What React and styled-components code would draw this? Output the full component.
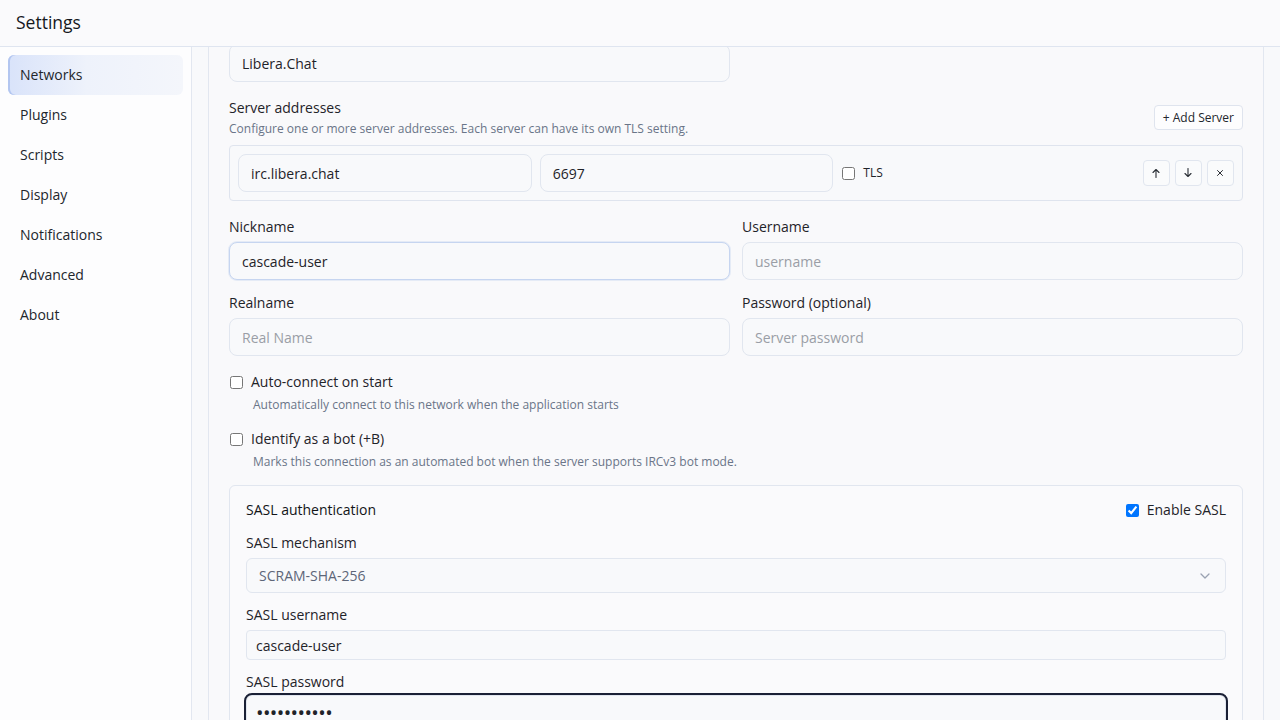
import React, { useLayoutEffect, useRef } from "react";
import styled, { createGlobalStyle } from "styled-components";

const GlobalStyle = createGlobalStyle`
html, body {
    margin: 0;
    height: 100%;
    overflow: hidden;
}
body {
    font-family: "Open Sans", "Noto Sans", "Liberation Sans", sans-serif;
    color: #1f2329;
    background: #f8f9fb;
}
#root {
    height: 100%;
}
* {
    box-sizing: border-box;
}
`

const Shell = styled.div`
display: flex;
flex-direction: column;
height: 100vh;
`
const Header = styled.header`
height: 47px;
flex-shrink: 0;
display: flex;
align-items: center;
padding-left: 16px;
padding-bottom: 2px;
background: #fafafc;
border-bottom: 1px solid #dfe5f0;
font-size: 17.5px;
font-weight: 500;
color: #15181d;
`
const Body = styled.div`
flex: 1;
display: flex;
min-height: 0;
`
const Sidebar = styled.nav`
width: 192px;
flex-shrink: 0;
padding: 8px;
background: #fdfdfe;
border-right: 1px solid #e2e7f0;
display: flex;
flex-direction: column;
`
const NavItem = styled.div`
height: 40px;
display: flex;
align-items: center;
padding: 0 0 2px 12px;
border-radius: 6px;
font-size: 14px;
color: #22262c;
background: ${p => p.$active ? "linear-gradient(90deg, #d9e3fa 0%, #eef2fb 45%, #f4f6fb 100%)" : "transparent"};
box-shadow: ${p => p.$active ? "inset 2px 0 0 #b3c6f0" : "none"};
`
const Main = styled.main`
flex: 1;
overflow: hidden;
padding: 16px;
background: #f8f9fb;
`
const Card = styled.section`
border: 1px solid #e2e7f0;
border-radius: 8px;
background: #f9f9fb;
padding: 20px;
display: flex;
flex-direction: column;
gap: 16px;
`
const Field = styled.div`
display: flex;
flex-direction: column;
gap: ${p => p.$gap || 5}px;
min-width: 0;
`
const Label = styled.label`
font-size: 14px;
line-height: 20px;
color: ${p => p.$strong ? "#111418" : "#1f2329"};
font-weight: ${p => p.$strong ? 500 : 400};
`
const Hint = styled.div`
font-size: 12px;
line-height: 16px;
color: #6a7588;
padding-left: ${p => p.$indent ? "24px" : "0"};
`
const TextInput = styled.input`
width: 100%;
height: ${p => p.$h || 38}px;
padding: 0 12px;
border: 1px solid ${p => p.$focus ? "#c6d5f0" : "#e1e6ef"};
border-radius: ${p => p.$r || 8}px;
background: #f8f9fb;
font-family: inherit;
font-size: 14px;
color: #1f2329;
outline: none;
box-shadow: ${p => p.$focus ? "0 0 0 1px rgba(140,170,230,0.18)" : "none"};
&::placeholder {
    color: #9a9ea6;
}
`
const PasswordInput = styled(TextInput)`
border: 1px solid #e1e6ef;
outline: 2px solid #1a2035;
outline-offset: 0;
padding: 0 9px;
font-size: 20px;
letter-spacing: -0.6px;
`
const HalfGrid = styled.div`
display: grid;
grid-template-columns: 1fr 1fr;
column-gap: 12px;
row-gap: 13px;
`
const SectionHead = styled.div`
display: flex;
align-items: center;
justify-content: space-between;
margin-bottom: -8px;
`
const HeadText = styled.div`
display: flex;
flex-direction: column;
gap: 3px;
`
const SmallButton = styled.button`
height: 25px;
padding: 0 8px;
border: 1px solid #dfe4ee;
border-radius: 4px;
background: #fdfdfe;
font-family: inherit;
font-size: 12px;
color: #22262c;
`
const ServerBox = styled.div`
display: grid;
grid-template-columns: 1fr 1fr 1fr auto;
gap: 8px;
align-items: center;
padding: 8px;
border: 1px solid #dfe4ee;
border-radius: 4px;
background: #f8f9fb;
`
const CheckRow = styled.label`
display: flex;
align-items: center;
gap: 8px;
font-size: ${p => p.$small ? 12 : 14}px;
line-height: 20px;
color: #1f2329;
input {
    margin: 0 0 0 1px;
    width: 13px;
    height: 13px;
}
`
const IconButtons = styled.div`
display: flex;
gap: 5px;
`
const IconButton = styled.button`
width: 27px;
height: 26px;
padding: 0;
display: flex;
align-items: center;
justify-content: center;
border: 1px solid #e1e6ef;
border-radius: 4px;
background: #fafbfc;
color: #22262c;
`
const OptionBlock = styled.div`
display: flex;
flex-direction: column;
gap: 5px;
`
const SaslBox = styled.div`
margin-top: -1px;
border: 1px solid #e1e6ef;
border-radius: 6px;
background: #fafafc;
padding: 16px;
display: flex;
flex-direction: column;
gap: 12px;
`
const SaslHead = styled.div`
display: flex;
align-items: center;
justify-content: space-between;
height: 16px;
margin-bottom: 3px;
`
const SelectWrap = styled.div`
position: relative;
`
const SelectBox = styled.select`
width: 100%;
height: 35px;
padding: 0 12px;
appearance: none;
border: 1px solid #e1e6ef;
border-radius: 6px;
background: #f8f9fb;
font-family: inherit;
font-size: 14px;
color: #5d6678;
outline: none;
`
const Chevron = styled.svg`
position: absolute;
right: 15px;
top: 12px;
pointer-events: none;
`

const navItems = ["Networks", "Plugins", "Scripts", "Display", "Notifications", "Advanced", "About"];

function Arrow({ dir }) {
    // small thin arrow used in the server row buttons
    const d = dir === "up" ? "M5 9.5V1.5M2 4.5l3-3 3 3" : "M5 0.5v8M2 5.5l3 3 3-3";
    return (
        <svg width="10" height="10" viewBox="0 0 10 10">
            <path d={d} fill="none" stroke="#2a2e35" strokeWidth="1.1" strokeLinecap="round" strokeLinejoin="round" />
        </svg>
    );
}

function Cross() {
    return (
        <svg width="8" height="8" viewBox="0 0 8 8">
            <path d="M1.5 1.5l5 5M6.5 1.5l-5 5" fill="none" stroke="#2a2e35" strokeWidth="1" strokeLinecap="round" />
        </svg>
    );
}

function App() {
    const mainRef = useRef(null);
    const firstRef = useRef(null);

    useLayoutEffect(() => {
        const main = mainRef.current;
        const first = firstRef.current;
        if (!main || !first) return;
        const off = first.getBoundingClientRect().top - main.getBoundingClientRect().top;
        main.scrollTop = off + 3;
    }, []);

    return (
        <Shell>
            <GlobalStyle />
            <Header>Settings</Header>
            <Body>
                <Sidebar>
                    {navItems.map((n, i) => (
                        <NavItem key={n} $active={i === 0}>{n}</NavItem>
                    ))}
                </Sidebar>
                <Main ref={mainRef}>
                    <Card>
                        <HalfGrid>
                            <Field>
                                <Label>Network name</Label>
                                <TextInput ref={firstRef} defaultValue="Libera.Chat" readOnly />
                            </Field>
                        </HalfGrid>

                        <SectionHead>
                            <HeadText>
                                <Label>Server addresses</Label>
                                <Hint>Configure one or more server addresses. Each server can have its own TLS setting.</Hint>
                            </HeadText>
                            <SmallButton>+ Add Server</SmallButton>
                        </SectionHead>
                        <ServerBox>
                            <TextInput defaultValue="irc.libera.chat" readOnly />
                            <TextInput defaultValue="6697" readOnly />
                            <CheckRow $small>
                                <input type="checkbox" />
                                TLS
                            </CheckRow>
                            <IconButtons>
                                <IconButton><Arrow dir="up" /></IconButton>
                                <IconButton><Arrow dir="down" /></IconButton>
                                <IconButton><Cross /></IconButton>
                            </IconButtons>
                        </ServerBox>

                        <HalfGrid>
                            <Field>
                                <Label>Nickname</Label>
                                <TextInput $focus defaultValue="cascade-user" readOnly />
                            </Field>
                            <Field>
                                <Label>Username</Label>
                                <TextInput placeholder="username" readOnly />
                            </Field>
                            <Field>
                                <Label>Realname</Label>
                                <TextInput placeholder="Real Name" readOnly />
                            </Field>
                            <Field>
                                <Label>Password (optional)</Label>
                                <TextInput placeholder="Server password" readOnly />
                            </Field>
                        </HalfGrid>

                        <OptionBlock>
                            <CheckRow>
                                <input type="checkbox" />
                                Auto-connect on start
                            </CheckRow>
                            <Hint $indent>Automatically connect to this network when the application starts</Hint>
                        </OptionBlock>
                        <OptionBlock>
                            <CheckRow>
                                <input type="checkbox" />
                                Identify as a bot (+B)
                            </CheckRow>
                            <Hint $indent>Marks this connection as an automated bot when the server supports IRCv3 bot mode.</Hint>
                        </OptionBlock>

                        <SaslBox>
                            <SaslHead>
                                <Label $strong>SASL authentication</Label>
                                <CheckRow>
                                    <input type="checkbox" defaultChecked />
                                    Enable SASL
                                </CheckRow>
                            </SaslHead>
                            <Field>
                                <Label>SASL mechanism</Label>
                                <SelectWrap>
                                    <SelectBox defaultValue="SCRAM-SHA-256">
                                        <option>PLAIN</option>
                                        <option>SCRAM-SHA-256</option>
                                        <option>EXTERNAL</option>
                                    </SelectBox>
                                    <Chevron width="12" height="12" viewBox="0 0 12 12">
                                        <path d="M2 4l4 4 4-4" fill="none" stroke="#9aa2b1" strokeWidth="1.3" strokeLinecap="round" strokeLinejoin="round" />
                                    </Chevron>
                                </SelectWrap>
                            </Field>
                            <Field>
                                <Label>SASL username</Label>
                                <TextInput $h={30} $r={4} style={{ paddingLeft: 9 }} defaultValue="cascade-user" readOnly />
                            </Field>
                            <Field $gap={3}>
                                <Label>SASL password</Label>
                                <PasswordInput type="password" $h={34} $r={6} defaultValue="cascade-pw1" readOnly />
                            </Field>
                        </SaslBox>
                    </Card>
                </Main>
            </Body>
        </Shell>
    );
}

export default App;
